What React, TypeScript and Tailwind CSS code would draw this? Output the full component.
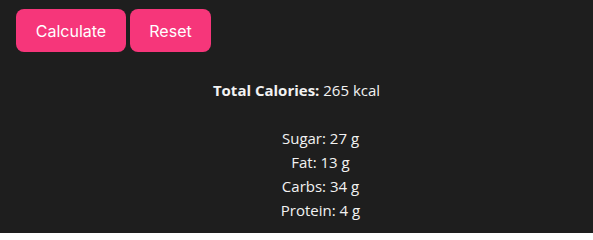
export default function App() {
  const nutrients = [
    { label: "Sugar", value: "27 g" },
    { label: "Fat", value: "13 g" },
    { label: "Carbs", value: "34 g" },
    { label: "Protein", value: "4 g" },
  ];

  return (
    <div className="min-h-[233px] bg-[#1e1e1e] text-[#f2f2f2] font-['Open_Sans',sans-serif]">
      <div className="flex gap-1 pl-4 pt-[9px]">
        <button className="h-[43px] w-[110px] rounded-lg bg-[#f6367a] text-white text-base font-['Inter',sans-serif]">
          Calculate
        </button>
        <button className="h-[43px] w-[81px] rounded-lg bg-[#f6367a] text-white text-base font-['Inter',sans-serif]">
          Reset
        </button>
      </div>

      <div className="mt-[26px] text-center text-[15px] leading-6">
        <p>
          <strong>Total Calories:</strong> 265 kcal
        </p>
        <ul className="mt-6 pl-12 leading-6">
          {nutrients.map((n) => (
            <li key={n.label}>
              {n.label}: {n.value}
            </li>
          ))}
        </ul>
      </div>
    </div>
  );
}
